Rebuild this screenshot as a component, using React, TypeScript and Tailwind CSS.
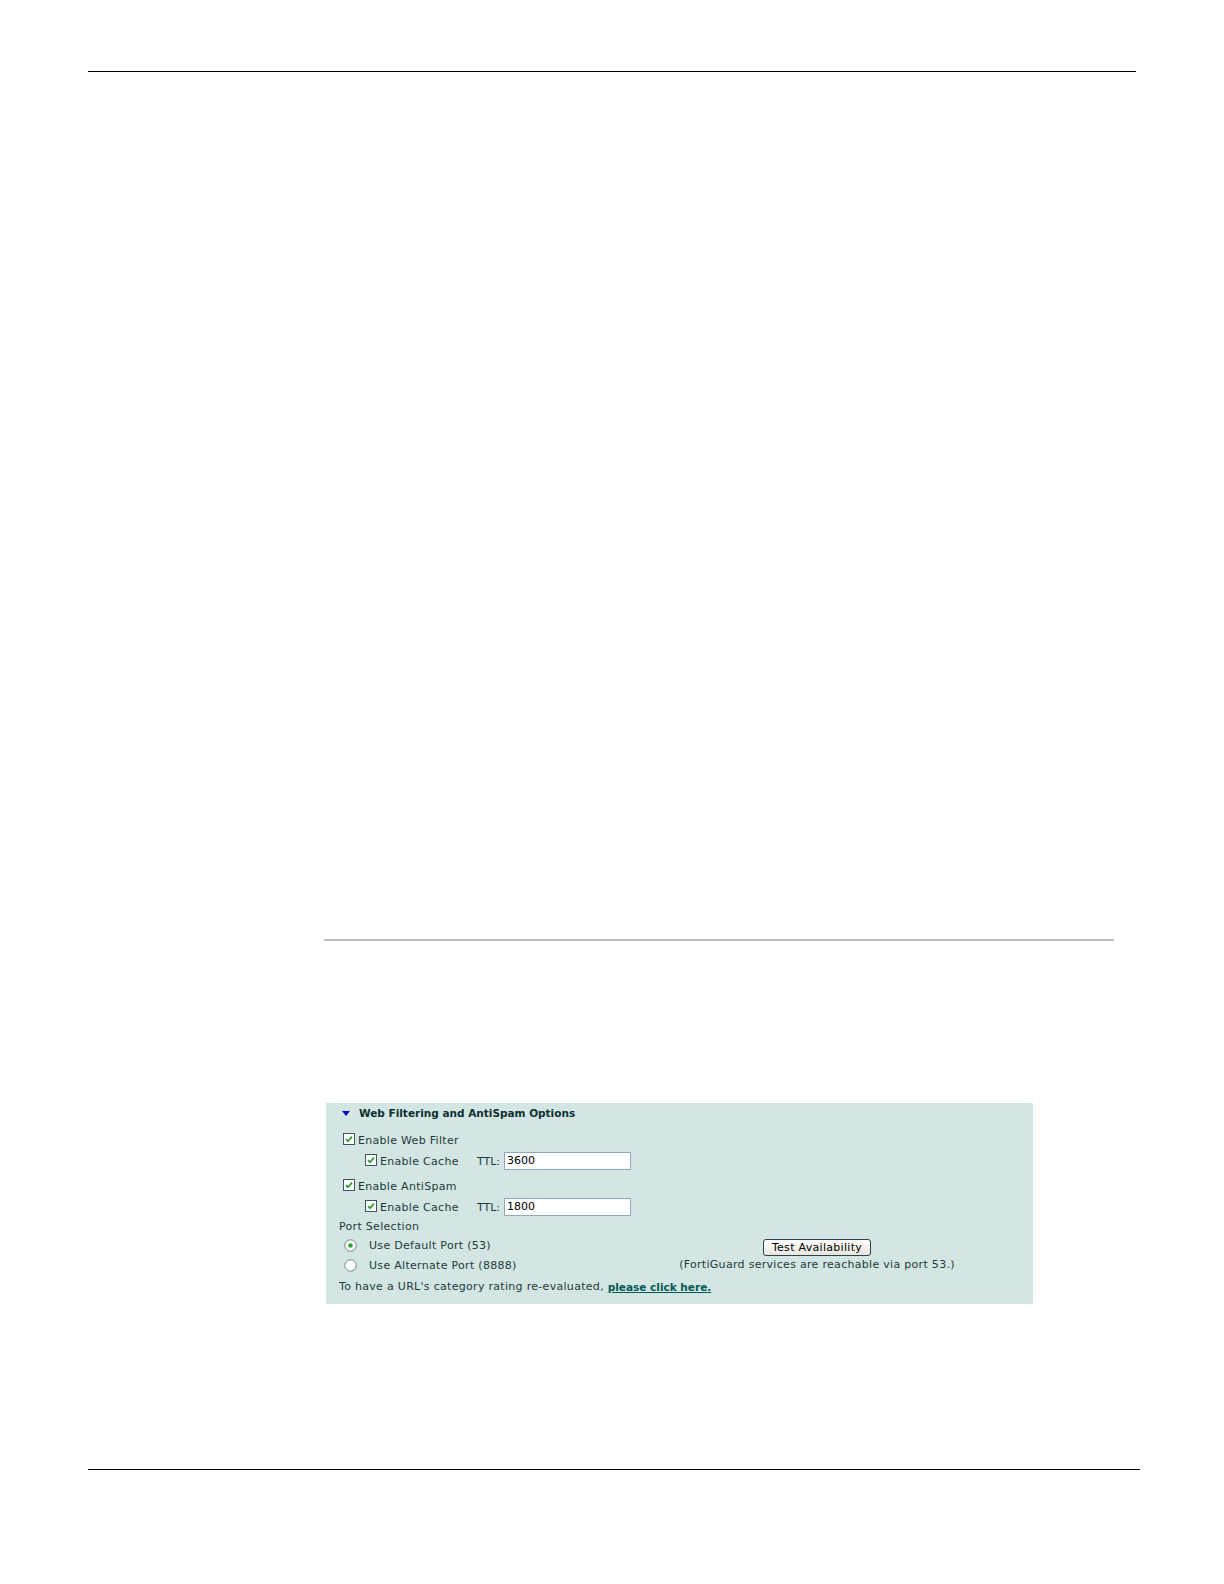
const font = { fontFamily: '"DejaVu Sans", Verdana, sans-serif' };

function Check() {
  return (
    <svg width="12" height="12" viewBox="0 0 12 12" className="mb-[2px] shrink-0">
      <rect x="0.5" y="0.5" width="11" height="11" fill="#ffffff" stroke="#3d5566" />
      <path d="M3 6.2 L5 8.2 L9 3.6" fill="none" stroke="#2f9a2f" strokeWidth="1.7" />
    </svg>
  );
}

function Radio({ on }: { on?: boolean }) {
  return (
    <svg width="13" height="13" viewBox="0 0 13 13" className="shrink-0">
      <circle cx="6.5" cy="6.5" r="5.7" fill="#ffffff" stroke="#6f8294" />
      {on && <circle cx="6.5" cy="6.5" r="2.3" fill="#2fa32f" />}
    </svg>
  );
}

function CacheRow({ ttl }: { ttl: string }) {
  return (
    <div className="flex h-[21px] items-center pl-[39px]">
      <Check />
      <span className="ml-[3px] w-[97px] whitespace-nowrap pt-[3px]">Enable Cache</span>
      <span className="w-[27px] pt-[3px] tracking-normal">TTL:</span>
      <div className="flex h-[18px] w-[127px] items-center border border-[#8fa9c0] bg-white pl-[2px] pt-[1px] tracking-normal text-black">
        {ttl}
      </div>
    </div>
  );
}

export default function App() {
  return (
    <div className="relative h-[1584px] w-[1224px] bg-white" style={font}>
      <div className="pt-[71px]">
        <div className="ml-[88px] h-px w-[1048px] bg-black" />
      </div>

      <div className="ml-[324px] mt-[867px] h-[2px] w-[790px] bg-[#bdbdbd]" />

      <div className="ml-[326px] mt-[162px] h-[201px] w-[707px] bg-[#d3e6e3] text-[11px] tracking-[0.3px] text-[#1e3a3a]">
        <div className="flex h-[20px] items-center">
          <svg width="8" height="5" viewBox="0 0 8 5" className="ml-[16px]">
            <polygon points="0,0 8,0 4,5" fill="#0000cc" />
          </svg>
          <span className="ml-[9px] pt-[2px] text-[10.5px] font-bold tracking-normal text-[#0d3030]">
            Web Filtering and AntiSpam Options
          </span>
        </div>

        <div className="mt-[6px] flex h-[21px] items-center pl-[17px]">
          <Check />
          <span className="ml-[3px] pt-[3px]">Enable Web Filter</span>
        </div>
        <CacheRow ttl="3600" />

        <div className="mt-[4px] flex h-[21px] items-center pl-[17px]">
          <Check />
          <span className="ml-[3px] pt-[3px]">Enable AntiSpam</span>
        </div>
        <CacheRow ttl="1800" />

        <div className="flex h-[19px] items-center pl-[13px] pt-[2px]">Port Selection</div>

        <div className="flex h-[40px]">
          <div className="flex w-[341px] flex-col">
            <div className="flex h-[19px] items-center pl-[18px]">
              <Radio on />
              <span className="ml-[12px] pt-[2px]">Use Default Port (53)</span>
            </div>
            <div className="flex h-[21px] items-center pl-[18px]">
              <Radio />
              <span className="ml-[12px] pt-[2px]">Use Alternate Port (8888)</span>
            </div>
          </div>
          <div className="flex w-[300px] flex-col items-center pt-[3px]">
            <button
              className="flex h-[17px] w-[108px] items-center justify-center rounded-[3px] border border-[#2b3f55] bg-gradient-to-b from-white to-[#e8e6dc] pt-[1px] text-[11px] tracking-[0.3px] text-black"
              style={font}
            >
              Test Availability
            </button>
            <div className="mt-[1px] flex h-[14px] items-center whitespace-nowrap pt-[2px]">
              (FortiGuard services are reachable via port 53.)
            </div>
          </div>
        </div>

        <div className="flex h-[21px] items-center whitespace-nowrap pl-[13px] pt-[2px]">
          <span>To have a URL's category rating re-evaluated,&nbsp;</span>
          <a href="#" className="text-[10.5px] font-bold tracking-normal text-[#005a55] underline">
            please click here.
          </a>
        </div>
      </div>

      <div className="ml-[88px] mt-[165px] h-px w-[1052px] bg-black" />
    </div>
  );
}
